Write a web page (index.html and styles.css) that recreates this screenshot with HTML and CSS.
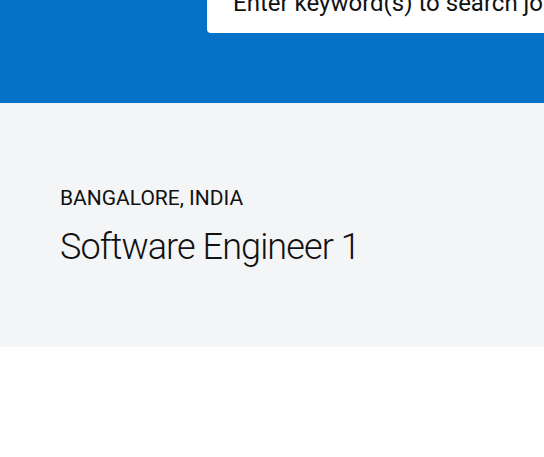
FILE: index.html
```
<!DOCTYPE html>
<html lang="en">
<head>
<meta charset="utf-8">
<title>Software Engineer 1</title>
<link rel="stylesheet" href="styles.css">
</head>
<body>
<header class="hero">
  <div class="search-box">
    <span class="search-placeholder">Enter keyword(s) to search jobs</span>
  </div>
</header>
<section class="job-head">
  <div class="job-location">BANGALORE, INDIA</div>
  <h1 class="job-title">Software Engineer 1</h1>
</section>
<main class="content"></main>
</body>
</html>
```
FILE: styles.css
```
html, body {
  margin: 0;
  padding: 0;
  background: #ffffff;
  font-family: Roboto, "Liberation Sans", sans-serif;
  overflow: hidden;
}

.hero {
  background: #0671c9;
  height: 103px;
  padding-left: 207px;
  box-sizing: border-box;
  overflow: hidden;
}

.search-box {
  background: #ffffff;
  margin-top: -40px;
  padding: 29px 0 16px 26px;
  border-radius: 0 0 0 4px;
  white-space: nowrap;
  overflow: hidden;
}

.search-placeholder {
  display: block;
  font-size: 24px;
  line-height: 28px;
  color: #111111;
}

.job-head {
  background: #f4f5f7;
  padding: 83px 0 78px 60px;
  display: flex;
  flex-direction: column;
  gap: 15px;
}

.job-location {
  font-size: 21px;
  line-height: 24px;
  color: #111111;
}

.job-title {
  margin: 0;
  font-size: 36px;
  line-height: 44px;
  font-weight: 300;
  letter-spacing: -0.9px;
  color: #111111;
}

.content {
  height: 120px;
}
```
